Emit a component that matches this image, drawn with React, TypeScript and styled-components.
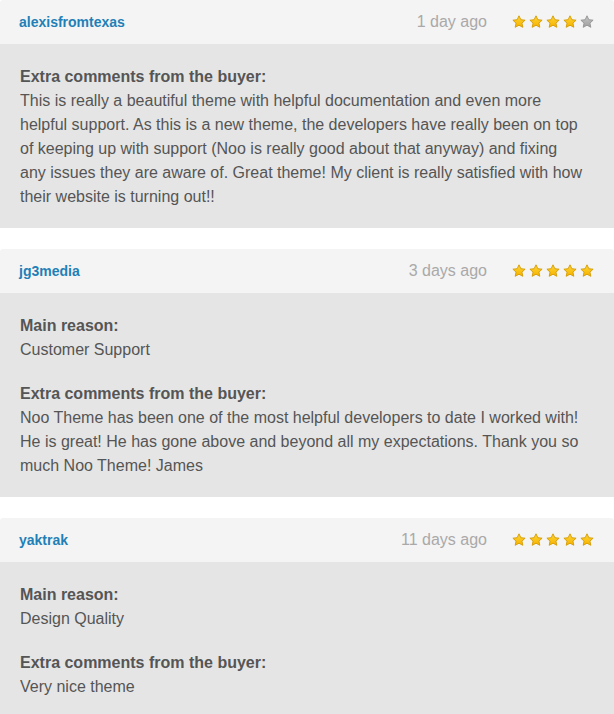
import React from "react";
import styled, { createGlobalStyle } from "styled-components";

const GlobalStyle = createGlobalStyle`
  html, body { margin: 0; padding: 0; background: #ffffff; }
  body { font-family: "Liberation Sans", Helvetica, Arial, sans-serif; }
`;

type Section = { label: string; lines: string[] };
type Review = { user: string; date: string; rating: number; sections: Section[] };

const reviews: Review[] = [
  {
    user: "alexisfromtexas",
    date: "1 day ago",
    rating: 4,
    sections: [
      {
        label: "Extra comments from the buyer:",
        lines: [
          "This is really a beautiful theme with helpful documentation and even more",
          "helpful support. As this is a new theme, the developers have really been on top",
          "of keeping up with support (Noo is really good about that anyway) and fixing",
          "any issues they are aware of. Great theme! My client is really satisfied with how",
          "their website is turning out!!",
        ],
      },
    ],
  },
  {
    user: "jg3media",
    date: "3 days ago",
    rating: 5,
    sections: [
      { label: "Main reason:", lines: ["Customer Support"] },
      {
        label: "Extra comments from the buyer:",
        lines: [
          "Noo Theme has been one of the most helpful developers to date I worked with!",
          "He is great! He has gone above and beyond all my expectations. Thank you so",
          "much Noo Theme! James",
        ],
      },
    ],
  },
  {
    user: "yaktrak",
    date: "11 days ago",
    rating: 5,
    sections: [
      { label: "Main reason:", lines: ["Design Quality"] },
      { label: "Extra comments from the buyer:", lines: ["Very nice theme"] },
    ],
  },
];

const List = styled.div`
  display: flex;
  flex-direction: column;
  gap: 21px;
  width: 614px;
`;

const Card = styled.div`
  display: flex;
  flex-direction: column;
`;

const Header = styled.div`
  display: flex;
  align-items: center;
  height: 44px;
  padding: 0 20px 0 19px;
  background: #f4f4f4;
  border-radius: 3px 3px 0 0;
`;

const User = styled.a`
  flex: 1;
  font-size: 14px;
  font-weight: bold;
  color: #1f80b7;
  text-decoration: none;
  margin-top: -1px;
`;

const Date = styled.span`
  font-size: 16px;
  color: #a9a9a9;
  margin-right: 25px;
`;

const Stars = styled.div`
  display: flex;
  gap: 3px;
  align-items: center;
`;

const Body = styled.div`
  background: #e5e5e5;
  padding: 21px 20px 19px 20px;
  display: flex;
  flex-direction: column;
  gap: 20px;
  color: #555555;
  font-size: 16px;
  line-height: 24px;
`;

const Block = styled.div`
  white-space: nowrap;
  overflow: hidden;
`;

const Label = styled.div`
  font-weight: bold;
`;

const Star: React.FC<{ on: boolean; id: string }> = ({ on, id }) => (
  <svg width="14" height="14" viewBox="0 0 14 14">
    <defs>
      <linearGradient id={id} x1="0" y1="0" x2="0" y2="1">
        <stop offset="0" stopColor={on ? "#ffd633" : "#c4c4c4"} />
        <stop offset="1" stopColor={on ? "#f6b200" : "#a0a0a0"} />
      </linearGradient>
    </defs>
    <path
      d="M7 0.8 L8.85 4.7 L13.1 5.2 L9.95 8.1 L10.8 12.3 L7 10.2 L3.2 12.3 L4.05 8.1 L0.9 5.2 L5.15 4.7 Z"
      fill={`url(#${id})`}
      stroke={on ? "#d49a00" : "#929292"}
      strokeWidth="0.9"
      strokeLinejoin="round"
    />
  </svg>
);

export default function App() {
  return (
    <>
      <GlobalStyle />
      <List>
        {reviews.map((r, ri) => (
          <Card key={r.user}>
            <Header>
              <User href="#">{r.user}</User>
              <Date>{r.date}</Date>
              <Stars>
                {[0, 1, 2, 3, 4].map((i) => (
                  <Star key={i} on={i < r.rating} id={`g${ri}-${i}`} />
                ))}
              </Stars>
            </Header>
            <Body>
              {r.sections.map((s) => (
                <Block key={s.label}>
                  <Label>{s.label}</Label>
                  {s.lines.map((l, li) => (
                    <div key={li}>{l}</div>
                  ))}
                </Block>
              ))}
            </Body>
          </Card>
        ))}
      </List>
    </>
  );
}
